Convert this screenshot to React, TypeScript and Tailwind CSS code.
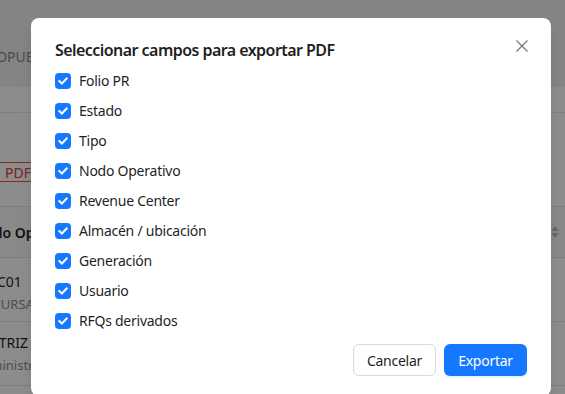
import React from "react";

const fields = [
  "Folio PR",
  "Estado",
  "Tipo",
  "Nodo Operativo",
  "Revenue Center",
  "Almacén / ubicación",
  "Generación",
  "Usuario",
  "RFQs derivados",
];

function Check() {
  return (
    <span className="flex h-4 w-4 shrink-0 items-center justify-center rounded-[4px] bg-[#1677ff]">
      <svg width="10" height="8" viewBox="0 0 10 8" fill="none">
        <path d="M1.3 4.1 L3.9 6.5 L8.7 1.5" stroke="white" strokeWidth="2" strokeLinecap="square" strokeLinejoin="miter" />
      </svg>
    </span>
  );
}

export default function App() {
  return (
    <div
      className="relative h-[394px] w-[565px] overflow-hidden bg-white text-[#1f1f1f]"
      style={{ fontFamily: '"Segoe UI", "Noto Sans", sans-serif' }}
    >
      {/* background page */}
      <div className="flex flex-col">
        <div className="flex h-[86px] items-end border-b border-[#e8e8e8] bg-[#f0f0f0] pb-[18px]">
          <div className="-ml-[21px] whitespace-nowrap text-[14px] leading-[20px] text-[#8a8a8a]">
            PROPUESTAS
          </div>
        </div>
        <div className="h-[27px] border-b border-[#e8e8e8]" />
        <div className="h-[49px]" />
        <div className="flex">
          <div className="-ml-[10px] flex h-[20px] items-center whitespace-nowrap border border-[#ff4d4f] pl-[14px] pr-[20px] text-[14px] text-[#e04040]">
            PDF
          </div>
        </div>
        <div className="h-[24px]" />
        <div className="flex h-[52px] items-center justify-between border-y border-[#e8e8e8] bg-[#fafafa]">
          <div className="-ml-[26px] whitespace-nowrap text-[14px] font-semibold text-[#1f1f1f]">Nodo Operativo</div>
          <svg width="10" height="14" viewBox="0 0 10 14" className="mr-[5px]">
            <path d="M5 1 L9 6 L1 6 Z" fill="#bfbfbf" />
            <path d="M5 13 L9 8 L1 8 Z" fill="#bfbfbf" />
          </svg>
        </div>
        <div className="flex h-[64px] flex-col border-b border-[#e8e8e8] pt-[13px]">
          <div className="-ml-[3px] whitespace-nowrap text-[14px] leading-[22px] text-[#1f1f1f]">C01</div>
          <div className="-ml-[24px] whitespace-nowrap text-[13px] leading-[22px] text-[#8c8c8c]">SUCURSAL</div>
        </div>
        <div className="flex h-[64px] flex-col border-b border-[#e8e8e8] pt-[10px]">
          <div className="-ml-[22px] whitespace-nowrap text-[14px] leading-[22px] text-[#1f1f1f]">MATRIZ</div>
          <div className="-ml-[26px] whitespace-nowrap text-[13px] leading-[22px] text-[#8c8c8c]">Administración</div>
        </div>
      </div>

      {/* overlay */}
      <div className="absolute inset-0 bg-black/45" />

      {/* modal */}
      <div className="absolute left-[31px] top-[18px] w-[520px] rounded-[8px] bg-white px-[24px] pb-[20px] pt-[20px] shadow-lg">
        <div className="mb-[8px] flex items-center justify-between">
          <div className="text-[16px] font-semibold leading-[24px] tracking-[-0.55px] text-[#1f1f1f]">
            Seleccionar campos para exportar PDF
          </div>
          <svg width="14" height="14" viewBox="0 0 14 14" className="mr-[-2px] mt-[-8px]">
            <path d="M1.5 1.5 L12.5 12.5 M12.5 1.5 L1.5 12.5" stroke="#7a7a7a" strokeWidth="1.3" />
          </svg>
        </div>
        <div className="flex flex-col gap-[8px]">
          {fields.map((f) => (
            <div key={f} className="flex h-[22px] items-center gap-[8px]">
              <Check />
              <span className="text-[14px] leading-[22px] tracking-[-0.25px] text-[#1f1f1f]">{f}</span>
            </div>
          ))}
        </div>
        <div className="mt-[12px] flex justify-end gap-[8px]">
          <button className="h-[32px] w-[83px] rounded-[6px] border border-[#d9d9d9] bg-white text-[14px] tracking-[-0.25px] text-[#1f1f1f]">
            Cancelar
          </button>
          <button className="h-[32px] w-[83px] rounded-[6px] bg-[#1677ff] text-[14px] tracking-[-0.25px] text-white shadow-[0_2px_0_rgba(5,145,255,0.1)]">
            Exportar
          </button>
        </div>
      </div>
    </div>
  );
}
